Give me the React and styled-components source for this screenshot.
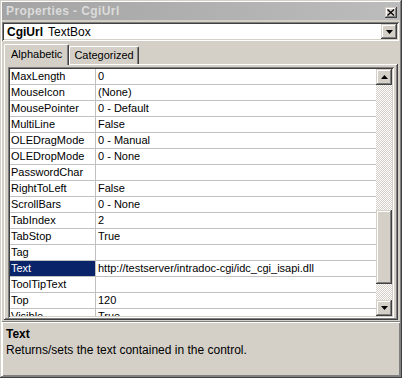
import React from "react";
import styled, { createGlobalStyle, css } from "styled-components";

const GlobalStyle = createGlobalStyle`
  html, body { margin: 0; padding: 0; background: #d4d0c8; }
  body {
    font-family: "Liberation Sans", Arial, sans-serif;
    font-size: 11px;
    color: #000;
  }
`;

const raised = css`
  background: #d4d0c8;
  box-shadow: inset -1px -1px #404040, inset 1px 1px #d4d0c8,
    inset -2px -2px #808080, inset 2px 2px #ffffff;
`;

const sunken = css`
  box-shadow: inset 1px 1px #808080, inset -1px -1px #ffffff,
    inset 2px 2px #404040, inset -2px -2px #d4d0c8;
`;

const Window = styled.div`
  width: 402px;
  height: 378px;
  box-sizing: border-box;
  padding: 2px;
  display: flex;
  flex-direction: column;
  overflow: hidden;
  ${raised};
`;

const TitleBar = styled.div`
  height: 18px;
  flex: none;
  display: flex;
  align-items: center;
  justify-content: space-between;
  padding: 0 3px 0 4px;
  background: linear-gradient(to right, #a4a4a4, #bcbcbc);
`;

const Title = styled.span`
  font-weight: bold;
  font-size: 12px;
  color: #dcdcdc;
  letter-spacing: 0.4px;
`;

const CloseButton = styled.div`
  width: 12px;
  height: 11px;
  display: flex;
  align-items: center;
  justify-content: center;
  margin-top: 2px;
  ${raised};
`;

const Combo = styled.div`
  margin: 2px 1px 0 0;
  height: 19px;
  flex: none;
  display: flex;
  align-items: center;
  background: #fff;
  padding: 0 2px 0 5px;
  ${sunken};
`;

const ComboText = styled.span`
  flex: 1;
  font-size: 12px;
  b { font-weight: bold; margin-right: 5px; }
`;

const ArrowButton = styled.div`
  width: ${(p) => p.$w || 16}px;
  height: ${(p) => p.$h || 16}px;
  flex: none;
  display: flex;
  align-items: center;
  justify-content: center;
  ${raised};
`;

const TabRow = styled.div`
  margin: 3px 0 0 2px;
  height: 20px;
  flex: none;
  display: flex;
  align-items: flex-end;
  position: relative;
  z-index: 1;
`;

const Tab = styled.div`
  box-sizing: border-box;
  height: ${(p) => (p.$active ? 21 : 18)}px;
  padding: 0 ${(p) => (p.$active ? 6 : 4)}px;
  margin-bottom: ${(p) => (p.$active ? -1 : 0)}px;
  display: flex;
  align-items: center;
  background: #d4d0c8;
  border-top: 1px solid #fff;
  border-left: 1px solid #fff;
  border-right: 1px solid #404040;
  box-shadow: inset -1px 0 #808080;
  border-radius: 2px 2px 0 0;
  padding-bottom: ${(p) => (p.$active ? 3 : 1)}px;
`;

const TabPanel = styled.div`
  flex: 1;
  min-height: 0;
  margin: 0 2px;
  box-sizing: border-box;
  padding: 3px 4px 2px 4px;
  display: flex;
  background: #d4d0c8;
  box-shadow: inset -1px -1px #404040, inset 1px 1px #ffffff,
    inset -2px -2px #808080;
`;

const GridFrame = styled.div`
  flex: 1;
  min-height: 0;
  display: flex;
  padding: 2px;
  ${sunken};
`;

const Rows = styled.div`
  flex: 1;
  min-height: 0;
  overflow: hidden;
  background: #fff;
`;

const Row = styled.div`
  display: grid;
  grid-template-columns: 86px 1fr;
  height: 16px;
  box-sizing: border-box;
  border-bottom: 1px solid #c0c0c0;
`;

const NameCell = styled.div`
  padding-left: 1px;
  line-height: 15px;
  white-space: nowrap;
  border-right: 1px solid #c0c0c0;
  background: ${(p) => (p.$selected ? "#0a246a" : "#fff")};
  color: ${(p) => (p.$selected ? "#fff" : "#000")};
`;

const ValueCell = styled.div`
  padding-left: 2px;
  line-height: 15px;
  white-space: nowrap;
  overflow: hidden;
`;

const ScrollBar = styled.div`
  width: 16px;
  flex: none;
  display: flex;
  flex-direction: column;
  background: repeating-conic-gradient(#ffffff 0 25%, #d4d0c8 0 50%) 0 0 / 2px 2px;
`;

const Track = styled.div`
  flex: 1;
  min-height: 0;
  display: flex;
  flex-direction: column;
  padding-top: 125px;
`;

const Thumb = styled.div`
  height: 74px;
  ${raised};
`;

const Description = styled.div`
  height: 55px;
  flex: none;
  margin-top: 1px;
  box-sizing: border-box;
  border-top: 1px solid #808080;
  padding: 4px 4px;
  line-height: 16px;
  font-size: 12px;
  box-shadow: inset 1px 1px #ffffff, inset -1px -1px #808080;
`;

const DescTitle = styled.div`
  font-weight: bold;
`;

const Triangle = ({ up }) => (
  <svg width="7" height="4" viewBox="0 0 7 4">
    <path d={up ? "M3.5 0 L7 4 L0 4 Z" : "M0 0 L7 0 L3.5 4 Z"} fill="#000" />
  </svg>
);

const rows = [
  ["MaxLength", "0"],
  ["MouseIcon", "(None)"],
  ["MousePointer", "0 - Default"],
  ["MultiLine", "False"],
  ["OLEDragMode", "0 - Manual"],
  ["OLEDropMode", "0 - None"],
  ["PasswordChar", ""],
  ["RightToLeft", "False"],
  ["ScrollBars", "0 - None"],
  ["TabIndex", "2"],
  ["TabStop", "True"],
  ["Tag", ""],
  ["Text", "http://testserver/intradoc-cgi/idc_cgi_isapi.dll"],
  ["ToolTipText", ""],
  ["Top", "120"],
  ["Visible", "True"],
];

export default function App() {
  return (
    <>
      <GlobalStyle />
      <Window>
        <TitleBar>
          <Title>Properties - CgiUrl</Title>
          <CloseButton>
            <svg width="8" height="7" viewBox="0 0 8 7">
              <path d="M0.5 0.5 L7 6.5 M7 0.5 L0.5 6.5" stroke="#000" strokeWidth="1.3" />
            </svg>
          </CloseButton>
        </TitleBar>
        <Combo>
          <ComboText>
            <b>CgiUrl</b>TextBox
          </ComboText>
          <ArrowButton $h={15}>
            <Triangle />
          </ArrowButton>
        </Combo>
        <TabRow>
          <Tab $active>Alphabetic</Tab>
          <Tab>Categorized</Tab>
        </TabRow>
        <TabPanel>
          <GridFrame>
            <Rows>
              {rows.map(([name, value]) => (
                <Row key={name}>
                  <NameCell $selected={name === "Text"}>{name}</NameCell>
                  <ValueCell>{value}</ValueCell>
                </Row>
              ))}
            </Rows>
            <ScrollBar>
              <ArrowButton>
                <Triangle up />
              </ArrowButton>
              <Track>
                <Thumb />
              </Track>
              <ArrowButton>
                <Triangle />
              </ArrowButton>
            </ScrollBar>
          </GridFrame>
        </TabPanel>
        <Description>
          <DescTitle>Text</DescTitle>
          <div>Returns/sets the text contained in the control.</div>
        </Description>
      </Window>
    </>
  );
}
